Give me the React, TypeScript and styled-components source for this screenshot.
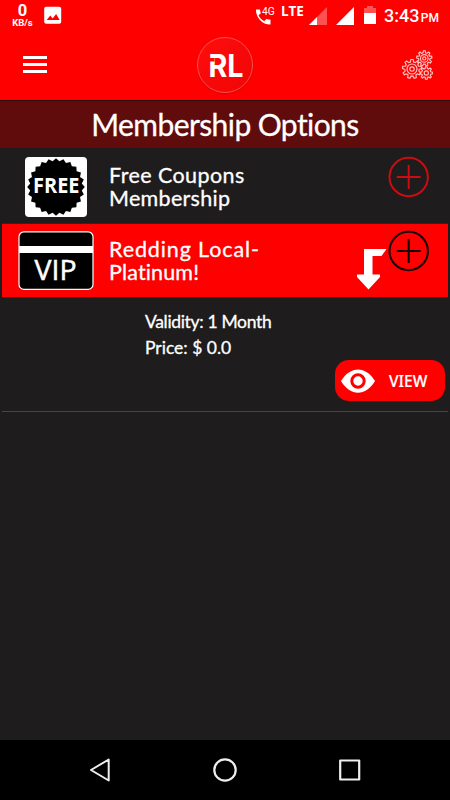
import React from "react";
import styled, { createGlobalStyle } from "styled-components";

const GlobalStyle = createGlobalStyle`
  *, *::before, *::after { box-sizing: border-box; }
  body { margin: 0; background: #1e1c1d; }
  svg { display: block; flex: none; }
`;

const Screen = styled.div`
  width: 450px;
  height: 800px;
  display: flex;
  flex-direction: column;
  background: #1e1c1d;
  color: #fff;
  font-family: Lato, "Open Sans", sans-serif;
  overflow: hidden;
`;

const StatusBar = styled.div`
  height: 32px;
  flex: none;
  display: flex;
  align-items: flex-start;
  background: #f00;
  padding: 0 10px 0 11px;
  font-family: Roboto, sans-serif;
`;

const NetSpeed = styled.div`
  width: 23px;
  padding-top: 4px;
  display: flex;
  flex-direction: column;
  align-items: center;
  font-weight: 700;
`;

const SpeedValue = styled.span`
  font-size: 16.5px;
  line-height: 14px;
`;

const SpeedUnit = styled.span`
  font-size: 9.5px;
  line-height: 9px;
  white-space: nowrap;
`;

const StatusIcon = styled.svg<{ $left?: number }>`
  margin-left: ${(p) => p.$left ?? 0}px;
  margin-top: 5px;
`;

const StatusRight = styled.div`
  margin-left: auto;
  display: flex;
  align-items: flex-start;
`;

const NetType = styled.span`
  width: 23px;
  margin: 4px 0 0 5px;
  font: 700 13.5px/15px "Open Sans", sans-serif;
  letter-spacing: -0.1px;
`;

const Clock = styled.div`
  width: 55px;
  margin: 5px 1px 0 8px;
  display: flex;
  align-items: baseline;
  justify-content: space-between;
  font-weight: 500;
  font-size: 18px;
  line-height: 22px;
  white-space: nowrap;
`;

const Meridiem = styled.span`
  font-size: 12px;
`;

const AppBar = styled.header`
  height: 68px;
  flex: none;
  display: grid;
  grid-template-columns: 1fr 56px 1fr;
  align-items: center;
  padding: 0 17px 2px 23px;
  background: #f00;
`;

const MenuButton = styled.div`
  display: flex;
  flex-direction: column;
  gap: 4px;
  width: 24px;
  margin-top: -2px;
`;

const MenuLine = styled.span`
  height: 3px;
  background: #fff;
`;

const Logo = styled.div`
  width: 56px;
  height: 56px;
  margin-left: -3px;
  border-radius: 50%;
  border: 1px solid #f65050;
  background: linear-gradient(135deg, #ff0d0d, #f00505);
  box-shadow: 0 1px 1px rgba(120, 0, 0, 0.35);
`;

const SettingsIcon = styled.svg`
  justify-self: end;
`;

const TitleBar = styled.h1`
  margin: 0;
  height: 48px;
  flex: none;
  border-top: 1px solid #300505;
  background: #600c0c;
  text-align: center;
  font-weight: 400;
  font-size: 30px;
  line-height: 46px;
  letter-spacing: -0.58px;
  -webkit-text-stroke: 0.3px #fff;
`;

const PlanRow = styled.div<{ $active?: boolean }>`
  height: ${(p) => (p.$active ? 74 : 76)}px;
  flex: none;
  margin: 0 2px;
  padding-right: 18px;
  display: flex;
  align-items: flex-start;
  background: ${(p) => (p.$active ? "#f00" : "transparent")};
  border-bottom: 1px solid #123033;
`;

const PlanThumb = styled.div<{ $top: number }>`
  width: 107px;
  padding: ${(p) => p.$top}px 0 0 16px;
`;

const PlanName = styled.div<{ $top: number }>`
  flex: 1;
  padding-top: ${(p) => p.$top}px;
  font-size: 21.5px;
  line-height: 22.5px;
  -webkit-text-stroke: 0.3px #fff;
  white-space: nowrap;
`;

const Spaced = styled.span<{ $gap: number }>`
  display: block;
  letter-spacing: ${(p) => p.$gap}px;
`;

const PlanActions = styled.div<{ $top: number }>`
  display: flex;
  align-items: flex-start;
  padding-top: ${(p) => p.$top}px;
`;

const DownArrow = styled.svg`
  margin: 19px 1px 0 0;
`;

const Details = styled.section`
  height: 114px;
  flex: none;
  margin: 0 2px;
  padding-top: 11px;
  display: flex;
  flex-direction: column;
  border-bottom: 1px solid #464446;
`;

const DetailLine = styled.div<{ $gap: number }>`
  margin-left: 143px;
  font-size: 17.5px;
  line-height: 26px;
  letter-spacing: ${(p) => p.$gap}px;
  -webkit-text-stroke: 0.3px #fff;
`;

const ViewButton = styled.button`
  align-self: flex-end;
  width: 110px;
  height: 41px;
  margin: -1px 3px 0 0;
  padding: 0 0 0 6px;
  display: flex;
  align-items: center;
  gap: 14px;
  border: 0;
  border-radius: 14px;
  background: #f00;
  color: #fff;
  font: 500 15.5px "Noto Sans", sans-serif;
  -webkit-text-stroke: 0.2px #fff;
`;

const NavBar = styled.nav`
  height: 60px;
  margin-top: auto;
  flex: none;
  display: flex;
  align-items: center;
  justify-content: space-between;
  padding: 0 88px;
  background: #000;
`;

const gearPath = (cx: number, cy: number, outer: number, inner: number, teeth: number) => {
  const points: string[] = [];
  const step = (Math.PI * 2) / teeth;
  for (let i = 0; i < teeth; i++) {
    const a = i * step - Math.PI / 2;
    [[-0.32, inner], [-0.17, outer], [0.17, outer], [0.32, inner]].forEach(([t, r]) => {
      points.push(`${(cx + Math.cos(a + t * step) * r).toFixed(2)} ${(cy + Math.sin(a + t * step) * r).toFixed(2)}`);
    });
  }
  return `M${points.join("L")}Z`;
};

const sealPoints = Array.from({ length: 48 }, (_, i) => {
  const a = (i * Math.PI) / 24 - Math.PI / 2;
  const r = i % 2 ? 26 : 28.8;
  return `${(31 + Math.cos(a) * r).toFixed(2)},${(30 + Math.sin(a) * r).toFixed(2)}`;
}).join(" ");

const Gears = () => (
  <SettingsIcon width="32" height="32" fill="none" stroke="#ffc4c4" strokeWidth="1.15">
    <path d={gearPath(11, 20, 9.6, 7.2, 9)} />
    <circle cx="11" cy="20" r="5" />
    <circle cx="11" cy="20" r="2.2" />
    <path d={gearPath(23.3, 9.4, 7.7, 5.7, 9)} />
    <circle cx="23.3" cy="9.4" r="3.8" />
    <circle cx="23.3" cy="9.4" r="1.6" />
    <path d={gearPath(25.3, 24, 6.3, 4.6, 8)} />
    <circle cx="25.3" cy="24" r="2.1" />
  </SettingsIcon>
);

const FreeBadge = () => (
  <svg width="80" height="62" viewBox="-7 -1 80 62">
    <rect width="62" height="60" rx="4" fill="#fff" />
    <polygon points={sealPoints} fill="#000" />
    <text x="8" y="36" fill="#fff" fontFamily="Open Sans" fontWeight="700" fontSize="20.5" textLength="46.5" lengthAdjust="spacingAndGlyphs">FREE</text>
  </svg>
);

const VipCard = () => (
  <svg width="77" height="61">
    <rect x="1" y="0.8" width="74" height="57.6" rx="5" fill="#000" stroke="#fff" strokeWidth="1.2" />
    <rect x="1" y="15" width="74" height="7" fill="#fff" />
    <text x="16.6" y="48.6" fill="#fff" stroke="#fff" strokeWidth="0.5" fontFamily="Open Sans" fontWeight="500" fontSize="26.5" textLength="42" lengthAdjust="spacingAndGlyphs">VIP</text>
  </svg>
);

const PlusCircle = ({ color }: { color: string }) => (
  <svg width="42" height="42" fill="none" stroke={color} strokeWidth="2">
    <circle cx="20.7" cy="21" r="19.2" />
    <path d="M8.7 21h24M20.7 9v24" />
  </svg>
);

export default function App() {
  return (
    <>
      <GlobalStyle />
      <Screen>
        <StatusBar>
          <NetSpeed>
            <SpeedValue>0</SpeedValue>
            <SpeedUnit>KB/s</SpeedUnit>
          </NetSpeed>
          <StatusIcon $left={10} width="18" height="20">
            <rect x="0.2" y="1.7" width="17" height="17" rx="2" fill="#fff" />
            <path d="M2.7 15l3.5-4.6 2.5 3 3.4-4.4 3.6 6z" fill="#f00" />
          </StatusIcon>
          <StatusRight>
            <StatusIcon width="21" height="22">
              <path d="M1 4.5h4l.7 4-2.2 1.8c1.4 2.8 3.2 4.5 5.7 5.9l2.1-2.2 4.2.8v4.8C7.5 19.8.7 12.800 1 4.5z" fill="#fff" />
              <text x="7" y="10.400" fill="#fff" fontFamily="Roboto" fontSize="11.500" textLength="12.800" lengthAdjust="spacingAndGlyphs">4G</text>
            </StatusIcon>
            <NetType>LTE</NetType>
            <StatusIcon $left={5} width="18" height="20">
              <path d="M18 2v18H0z" fill="#ff5151" />
              <path d="M8 12v8H0z" fill="#fff" />
            </StatusIcon>
            <StatusIcon $left={9} width="18" height="20">
              <path d="M18 2v18H0z" fill="#fff" />
            </StatusIcon>
            <StatusIcon $left={10} width="12" height="20">
              <path d="M0 3h3V1h6v2h3v5H0z" fill="#ff5151" />
              <path d="M0 8h12v11H0z" fill="#fff" />
            </StatusIcon>
            <Clock>
              3:43 <Meridiem>PM</Meridiem>
            </Clock>
          </StatusRight>
        </StatusBar>

        <AppBar>
          <MenuButton>
            <MenuLine />
            <MenuLine />
            <MenuLine />
          </MenuButton>
          <Logo>
            <svg width="54" height="54">
              <text x="10.500" y="38.500" fill="#fff" fontFamily="Inter" fontWeight="700" fontSize="31.500" textLength="35" lengthAdjust="spacingAndGlyphs">RL</text>
              <path d="M10 20h6.500v3.500H10z" fill="#fb0a0a" />
            </svg>
          </Logo>
          <Gears />
        </AppBar>

        <TitleBar>Membership Options</TitleBar>

        <PlanRow>
          <PlanThumb $top={8}>
            <FreeBadge />
          </PlanThumb>
          <PlanName $top={16}>
            <Spaced $gap={0.42}>Free Coupons</Spaced>
            <Spaced $gap={0.3}>Membership</Spaced>
          </PlanName>
          <PlanActions $top={8}>
            <PlusCircle color="#cc0c10" />
          </PlanActions>
        </PlanRow>
        <PlanRow $active>
          <PlanThumb $top={7}>
            <VipCard />
          </PlanThumb>
          <PlanName $top={14}>
            <Spaced $gap={0.88}>Redding Local-</Spaced>
            <Spaced $gap={0.15}>Platinum!</Spaced>
          </PlanName>
          <PlanActions $top={6}>
            <DownArrow width="30" height="42" fill="#fff">
              <path d="M7 0h22.500l-5 7h-9v18.500h7.500v2.500L11.500 40.500 0 28v-2.500h7z" />
            </DownArrow>
            <PlusCircle color="#140000" />
          </PlanActions>
        </PlanRow>

        <Details>
          <DetailLine $gap={-0.33}>Validity: 1 Month</DetailLine>
          <DetailLine $gap={0}>Price: $ 0.0</DetailLine>
          <ViewButton>
            <svg width="34" height="24">
              <path d="M0 12C9-3.500 25-3.500 34 12 25 27.500 9 27.500 0 12z" fill="#fff" />
              <circle cx="17" cy="12" r="6.200" fill="#fff" stroke="#f00" strokeWidth="3" />
            </svg>
            VIEW
          </ViewButton>
        </Details>

        <NavBar>
          <svg width="24" height="26" fill="none" stroke="#eee" strokeWidth="2" strokeLinejoin="round">
            <path d="M20.700 2.500v21L3 13z" />
          </svg>
          <svg width="26" height="26" fill="none" stroke="#eee" strokeWidth="2.200">
            <circle cx="13" cy="13" r="10.700" />
          </svg>
          <svg width="24" height="24" fill="none" stroke="#eee" strokeWidth="2.200" strokeLinejoin="round">
            <rect x="2.200" y="2.500" width="19" height="19" />
          </svg>
        </NavBar>
      </Screen>
    </>
  );
}
